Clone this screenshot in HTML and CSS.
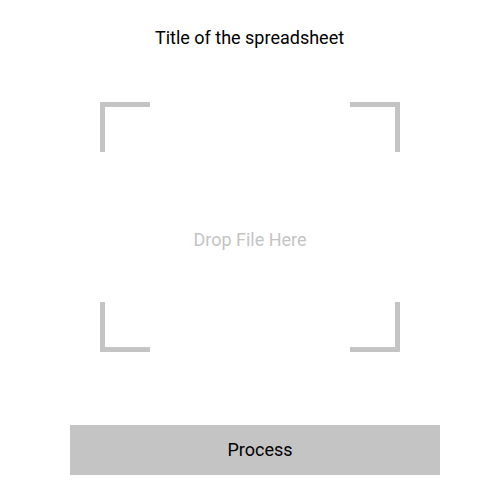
FILE: index.html
```html
<!DOCTYPE html>
<html>
<head>
<meta charset="utf-8">
<link rel="stylesheet" href="styles.css">
</head>
<body>
<div class="page">
  <h1 class="title">Title of the spreadsheet</h1>
  <div class="drop">
    <div class="corner tl"></div>
    <div class="spacer"></div>
    <div class="corner tr"></div>
    <div class="drop-text">Drop File Here</div>
    <div class="corner bl"></div>
    <div class="spacer"></div>
    <div class="corner br"></div>
  </div>
  <button class="process">Process</button>
</div>
</body>
</html>
```
FILE: styles.css
```css
html, body {
  margin: 0;
  padding: 0;
  background: #ffffff;
}
.page {
  width: 500px;
  height: 500px;
  display: flex;
  flex-direction: column;
  align-items: center;
  font-family: Roboto, "Liberation Sans", sans-serif;
}
.title {
  margin: 27px 0 0 -1px;
  font-size: 18px;
  font-weight: 400;
  line-height: 21px;
  color: #000000;
}
.drop {
  margin-top: 54px;
  width: 300px;
  height: 250px;
  display: grid;
  grid-template-columns: 50px 1fr 50px;
  grid-template-rows: 50px 1fr 50px;
}
.corner {
  box-sizing: border-box;
  border: 0 solid #c4c4c4;
}
.tl { border-top-width: 5px; border-left-width: 5px; }
.tr { border-top-width: 5px; border-right-width: 5px; }
.bl { border-bottom-width: 5px; border-left-width: 5px; }
.br { border-bottom-width: 5px; border-right-width: 5px; }
.drop-text {
  grid-column: 1 / 4;
  display: flex;
  align-items: center;
  justify-content: center;
  font-size: 18px;
  color: #c4c4c4;
  padding-top: 24px;
}
.process {
  margin: 73px 0 0 10px;
  width: 370px;
  height: 50px;
  border: none;
  background: #c4c4c4;
  font-family: Roboto, "Liberation Sans", sans-serif;
  font-size: 18px;
  color: #000000;
  padding: 0 0 2px 10px;
}
```
